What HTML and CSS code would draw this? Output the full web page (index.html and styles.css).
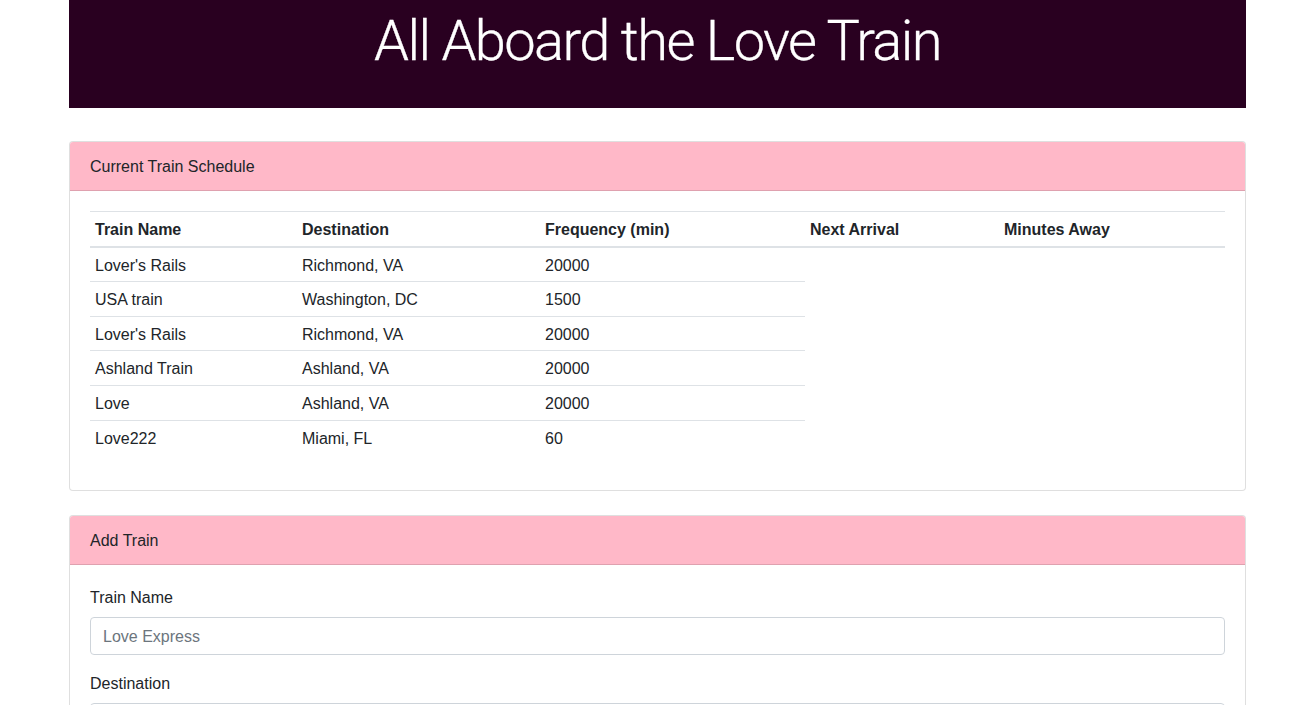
FILE: index.html
```html
<!DOCTYPE html>
<html lang="en">
<head>
<meta charset="utf-8">
<title>Love Train</title>
<link rel="stylesheet" href="styles.css">
</head>
<body>
<div class="page">
  <header class="hero">
    <h1 class="hero-title">All Aboard the Love Train</h1>
  </header>

  <section class="card">
    <div class="card-header">Current Train Schedule</div>
    <div class="card-body">
      <table class="schedule">
        <thead>
          <tr>
            <th class="c1">Train Name</th>
            <th class="c2">Destination</th>
            <th class="c3">Frequency (min)</th>
            <th class="c4">Next Arrival</th>
            <th class="c5">Minutes Away</th>
          </tr>
        </thead>
        <tbody>
          <tr><td>Lover's Rails</td><td>Richmond, VA</td><td>20000</td></tr>
          <tr><td>USA train</td><td>Washington, DC</td><td>1500</td></tr>
          <tr><td>Lover's Rails</td><td>Richmond, VA</td><td>20000</td></tr>
          <tr><td>Ashland Train</td><td>Ashland, VA</td><td>20000</td></tr>
          <tr><td>Love</td><td>Ashland, VA</td><td>20000</td></tr>
          <tr><td>Love222</td><td>Miami, FL</td><td>60</td></tr>
        </tbody>
      </table>
    </div>
  </section>

  <section class="card card-add">
    <div class="card-header">Add Train</div>
    <div class="card-body">
      <form class="form">
        <div class="form-group">
          <label class="label" for="name">Train Name</label>
          <input class="input" id="name" type="text" placeholder="Love Express">
        </div>
        <div class="form-group">
          <label class="label" for="dest">Destination</label>
          <input class="input" id="dest" type="text">
        </div>
      </form>
    </div>
  </section>
</div>
</body>
</html>
```

FILE: styles.css
```css
* { box-sizing: border-box; }

html, body {
  margin: 0;
  padding: 0;
  background: #fff;
}

body {
  font-family: "Liberation Sans", Arial, sans-serif;
  font-size: 16px;
  line-height: 24px;
  color: #212529;
}

.page {
  width: 1177px;
  margin-left: 69px;
}

.hero {
  background: #290020;
  height: 108px;
  padding-top: 8px;
}

.hero-title {
  margin: 0;
  text-align: center;
  font-family: "Roboto", "Liberation Sans", sans-serif;
  font-weight: 300;
  font-size: 56px;
  line-height: 67px;
  color: #fff;
  letter-spacing: -1.6px;
  -webkit-text-stroke: 0.3px #fff;
}

.card {
  margin-top: 33px;
  border: 1px solid rgba(0, 0, 0, 0.125);
  border-radius: 4px;
  background: #fff;
  overflow: hidden;
}

.card-add {
  margin-top: 24px;
}

.card-header {
  background: #ffb8c8;
  padding: 13px 20px 11px;
  border-bottom: 1px solid rgba(0, 0, 0, 0.125);
}

.card-body {
  padding: 20px;
}

.schedule {
  width: 100%;
  border-collapse: collapse;
  margin-bottom: 16px;
  table-layout: fixed;
}

.schedule th,
.schedule td {
  padding: 6px 5px 3.6px;
  text-align: left;
  vertical-align: top;
  border-top: 1px solid #dee2e6;
}

.schedule th {
  font-weight: bold;
  border-bottom: 2px solid #dee2e6;
}

.schedule tbody tr:first-child td { border-top: none; }

.c1 { width: 207px; }
.c2 { width: 243px; }
.c3 { width: 265px; }
.c4 { width: 194px; }
.c5 { width: auto; }

.form-group {
  margin-bottom: 16px;
}

.label {
  display: block;
  padding-top: 1px;
  margin-bottom: 7px;
}

.input {
  display: block;
  width: 100%;
  height: 38px;
  padding: 7px 12px 5px;
  font-family: inherit;
  font-size: 16px;
  line-height: 24px;
  color: #495057;
  border: 1px solid #ced4da;
  border-radius: 4px;
  background: #fff;
}

.input::placeholder {
  color: #6c757d;
  opacity: 1;
}
```
